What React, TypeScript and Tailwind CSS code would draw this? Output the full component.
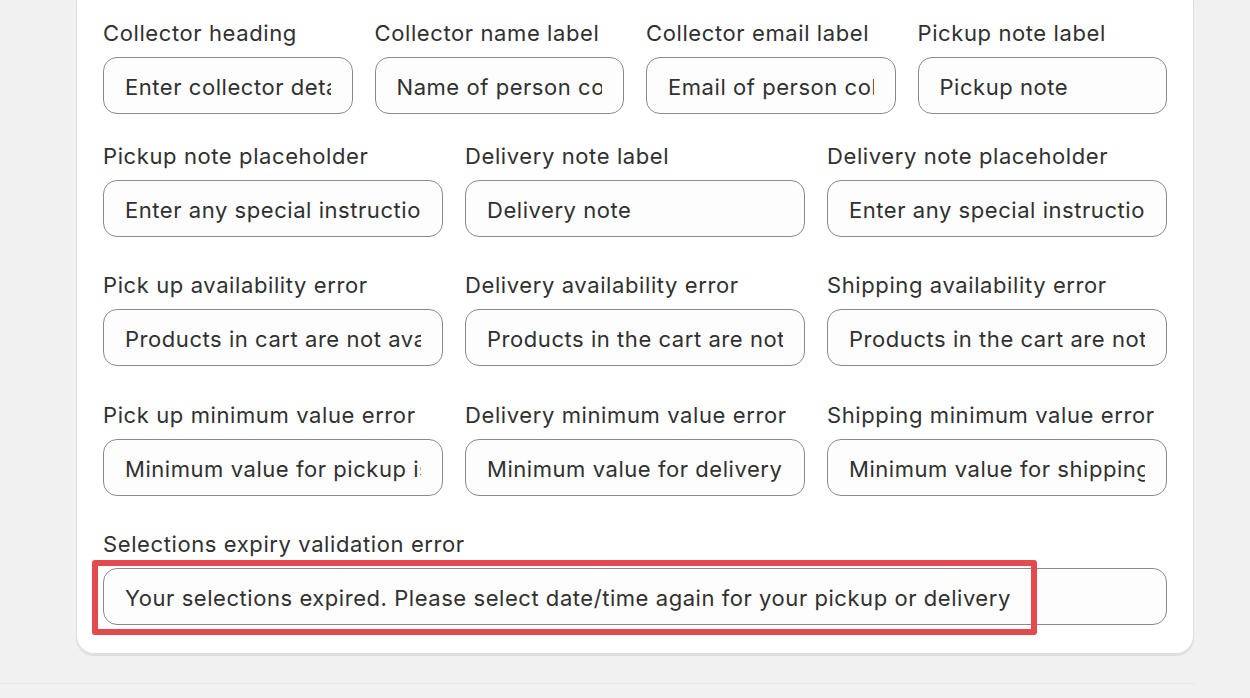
import React from 'react';

type Field = { label: string; value: string };

const rowOne: Field[] = [
  { label: 'Collector heading', value: 'Enter collector details' },
  { label: 'Collector name label', value: 'Name of person collecting' },
  { label: 'Collector email label', value: 'Email of person collecting' },
  { label: 'Pickup note label', value: 'Pickup note' },
];

const rowTwo: Field[] = [
  { label: 'Pickup note placeholder', value: 'Enter any special instructions' },
  { label: 'Delivery note label', value: 'Delivery note' },
  { label: 'Delivery note placeholder', value: 'Enter any special instructions' },
];

const rowThree: Field[] = [
  { label: 'Pick up availability error', value: 'Products in cart are not available for pickup' },
  { label: 'Delivery availability error', value: 'Products in the cart are not available for delivery' },
  { label: 'Shipping availability error', value: 'Products in the cart are not available for shipping' },
];

const rowFour: Field[] = [
  { label: 'Pick up minimum value error', value: 'Minimum value for pickup is' },
  { label: 'Delivery minimum value error', value: 'Minimum value for delivery is' },
  { label: 'Shipping minimum value error', value: 'Minimum value for shipping is' },
];

const inputCls =
  'h-[57px] w-full rounded-[14px] border border-[#8a8a8a] bg-[#fdfdfd] px-[21px] pt-[2px] text-[22px] tracking-[0.55px] text-[#303030] outline-none';

function TextField({ label, value }: Field) {
  return (
    <label className="flex flex-col min-w-0">
      <span className="text-[22px] tracking-[0.6px] leading-[28px] mb-[10px] text-[#303030] whitespace-nowrap">{label}</span>
      <input readOnly value={value} className={inputCls} style={{ fontFamily: 'inherit' }} />
    </label>
  );
}

export default function App() {
  return (
    <div className="min-h-screen bg-[#f1f1f1] font-['Inter',sans-serif] antialiased">
      <div className="pl-[76px] w-[1194px]">
        <div className="rounded-b-[18px] border border-t-0 border-[#e0e0e0] bg-white px-[26px] pt-[19px] pb-[28px] shadow-[0_2px_1px_rgba(0,0,0,0.08)]">
          <div className="grid grid-cols-4 gap-x-[22px]">
            {rowOne.map(f => <TextField key={f.label} {...f} />)}
          </div>
          <div className="grid grid-cols-3 gap-x-[22px] mt-[28px]">
            {rowTwo.map(f => <TextField key={f.label} {...f} />)}
          </div>
          <div className="grid grid-cols-3 gap-x-[22px] mt-[34px]">
            {rowThree.map(f => <TextField key={f.label} {...f} />)}
          </div>
          <div className="grid grid-cols-3 gap-x-[22px] mt-[35px]">
            {rowFour.map(f => <TextField key={f.label} {...f} />)}
          </div>
          <div className="mt-[34px] flex flex-col">
            <span className="text-[22px] tracking-[0.6px] leading-[28px] mb-[10px] text-[#303030]">Selections expiry validation error</span>
            <div className="relative">
              <input
                readOnly
                value="Your selections expired. Please select date/time again for your pickup or delivery"
                className={inputCls}
                style={{ fontFamily: 'inherit' }}
              />
              {/* annotation box */}
              <div className="absolute -left-[11px] -top-[8px] w-[945px] h-[75px] rounded-[3px] border-[6px] border-[#e34a4f] pointer-events-none" />
            </div>
          </div>
        </div>
      </div>
      <div className="mt-[29px] w-[1195px] border-t border-[#e6e6e6]" />
    </div>
  );
}
